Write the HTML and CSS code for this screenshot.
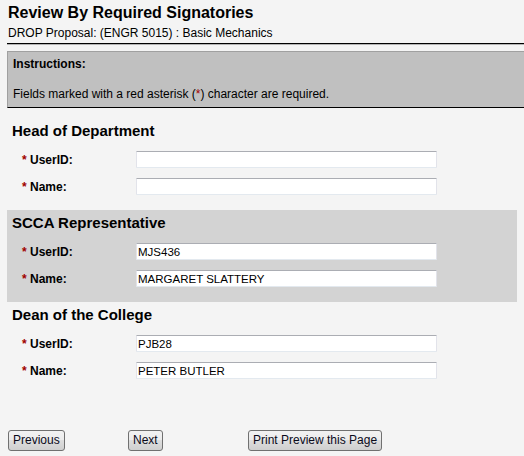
FILE: index.html
```html
<!DOCTYPE html>
<html>
<head>
<meta charset="utf-8">
<title>Review By Required Signatories</title>
<link rel="stylesheet" href="styles.css">
</head>
<body>
<div class="page">
  <div class="header">
    <h1 class="title">Review By Required Signatories</h1>
    <div class="subtitle">DROP Proposal: (ENGR 5015) : Basic Mechanics</div>
  </div>

  <div class="instructions">
    <div class="instr-head">Instructions:</div>
    <div class="instr-text">Fields marked with a red asterisk (<span class="req">*</span>) character are required.</div>
  </div>

  <div class="section">
    <h2 class="sec-title">Head of Department</h2>
    <div class="rows">
      <label class="label"><span class="req">*</span> UserID:</label>
      <input class="field" type="text" value="">
      <label class="label"><span class="req">*</span> Name:</label>
      <input class="field" type="text" value="">
    </div>
  </div>

  <div class="section shaded">
    <h2 class="sec-title">SCCA Representative</h2>
    <div class="rows">
      <label class="label"><span class="req">*</span> UserID:</label>
      <input class="field" type="text" value="MJS436">
      <label class="label"><span class="req">*</span> Name:</label>
      <input class="field" type="text" value="MARGARET SLATTERY">
    </div>
  </div>

  <div class="section">
    <h2 class="sec-title">Dean of the College</h2>
    <div class="rows">
      <label class="label"><span class="req">*</span> UserID:</label>
      <input class="field" type="text" value="PJB28">
      <label class="label"><span class="req">*</span> Name:</label>
      <input class="field" type="text" value="PETER BUTLER">
    </div>
  </div>

  <div class="buttons">
    <div class="btn-cell"><button class="btn" type="button">Previous</button></div>
    <div class="btn-cell"><button class="btn" type="button">Next</button></div>
    <div class="btn-cell"><button class="btn" type="button">Print Preview this Page</button></div>
  </div>
</div>
</body>
</html>
```

FILE: styles.css
```css
html, body {
  margin: 0;
  padding: 0;
  background: #f4f4f4;
}

body {
  font-family: "Liberation Sans", Arial, sans-serif;
  font-size: 12px;
  color: #000;
  overflow: hidden;
}

.page {
  padding: 0 0 0 7px;
}

.header {
  padding: 3px 0 3px 1px;
  border-bottom: 1px solid #000;
  box-shadow: 0 1px 0 #b4b4b4;
}

.title {
  margin: 0 0 4px 0;
  font-size: 16px;
  line-height: 19px;
  font-weight: bold;
}

.subtitle {
  font-size: 12px;
  line-height: 14px;
}

.instructions {
  margin-top: 7px;
  background: #c0c0c0;
  border-top: 1px solid #a0a0a0;
  border-left: 1px solid #a0a0a0;
  border-bottom: 1px solid #000;
  padding: 5px 0 6px 5px;
  line-height: 14px;
}

.instr-head {
  font-weight: bold;
}

.instr-text {
  margin-top: 16px;
}

.req {
  color: #a00000;
}

.section {
  width: 510px;
  height: 92px;
  box-sizing: border-box;
  padding: 4px 0 0 5px;
}

.instructions + .section {
  margin-top: 10px;
}

.shaded {
  background: #d3d3d3;
}

.sec-title {
  margin: 0;
  font-size: 15px;
  line-height: 18px;
  font-weight: bold;
}

.rows {
  margin-top: 11px;
  display: grid;
  grid-template-columns: 114px 301px;
  grid-auto-rows: 17px;
  row-gap: 10px;
  align-items: center;
  padding-left: 10px;
}

.label {
  font-weight: bold;
  font-size: 12px;
  line-height: 14px;
}

.field {
  box-sizing: border-box;
  width: 301px;
  height: 17px;
  margin: 0;
  padding: 0 1px;
  background: #fff;
  border: 1px solid;
  border-color: #abadb3 #e2e3ea #e3e9ef #e2e3ea;
  border-radius: 1px;
  font-family: "Liberation Sans", Arial, sans-serif;
  font-size: 11.5px;
  color: #000;
  outline: none;
}

.buttons {
  margin-top: 36px;
  display: grid;
  grid-template-columns: 120px 120px auto;
  padding-left: 1px;
}

.btn-cell {
  display: flex;
}

.btn {
  height: 21px;
  margin: 0;
  padding: 0 4px;
  border: 1px solid #707070;
  border-radius: 3px;
  background: linear-gradient(#f2f2f2 0%, #ebebeb 50%, #dddddd 50%, #cfcfcf 100%);
  font-family: "Liberation Sans", Arial, sans-serif;
  font-size: 12px;
  color: #0a0a1a;
  line-height: 19px;
  white-space: nowrap;
}
```
